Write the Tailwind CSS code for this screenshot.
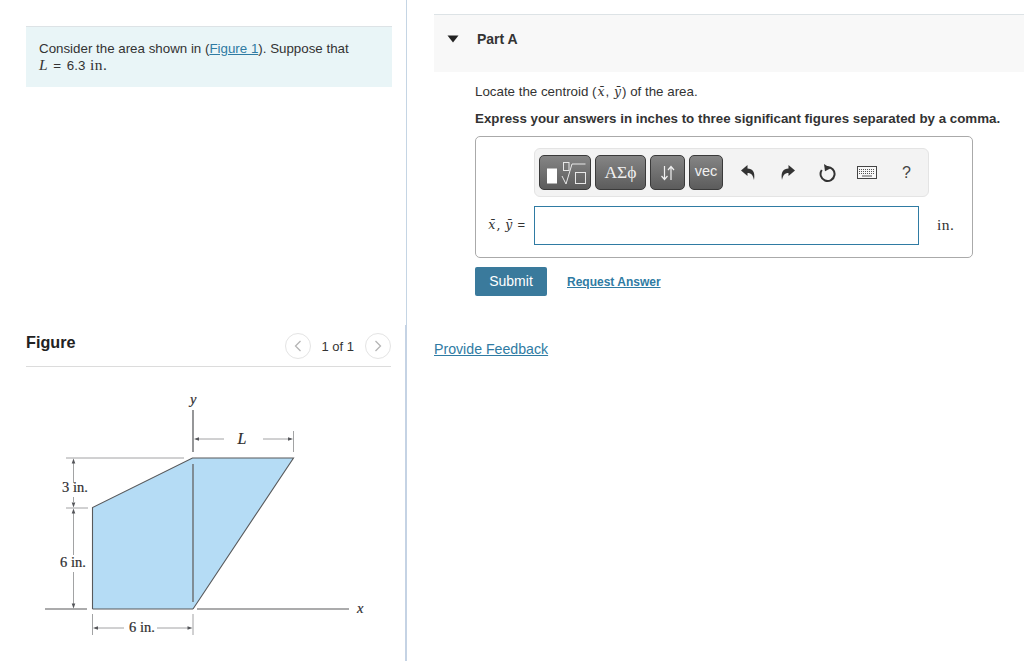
<!DOCTYPE html>
<html lang="en">
<head>
    <meta charset="UTF-8">
    <meta name="viewport" content="width=device-width, initial-scale=1.0">
    <title>Part A</title>
    <script src="https://cdn.jsdelivr.net/npm/@tailwindcss/browser@4"></script>
</head>
<body class="bg-white font-['Liberation_Sans',sans-serif] text-[#333] text-[13.33px] overflow-hidden">

<div class="flex w-[1024px] h-[661px] overflow-hidden">

    <!-- Left column -->
    <div class="w-[407px] flex flex-col shrink-0">
        <div class="h-[325px] border-r border-[#c5d5e4] pt-[26px] pl-[26px] pr-[14px]">
            <div class="h-[61px] bg-[#e9f5f7] border-t border-[#dde3e6] pl-[13px] pt-[13px] leading-[17px]">
                <p>Consider the area shown in (<a href="#" class="text-[#2f7ba3] underline">Figure 1</a>). Suppose that</p>
                <p class="leading-[16px] whitespace-nowrap"><i class="font-['Liberation_Serif',serif] text-[15.5px]">L</i> <span class="mx-[2px]">=</span> 6.3 <span class="font-['Liberation_Serif',serif] text-[15.5px] tracking-[0.5px] ml-[1px]">in.</span></p>
            </div>
        </div>

        <div class="flex-1 border-r-2 border-[#c5d3e4]">
            <!-- Figure header -->
            <div class="ml-[26px] w-[365px] h-[42px] border-b border-[#dcdcdc] flex items-start justify-between">
                <h2 class="text-[16.2px] font-bold text-[#222] leading-[16px] pt-[9px]">Figure</h2>
                <div class="flex items-center gap-[7px] pt-[8px]">
                    <span class="w-[26px] h-[26px] rounded-full border border-[#e4e4e4] flex items-center justify-center">
                        <svg width="8" height="12" viewBox="0 0 8 12" fill="none" stroke="#b5b5b5" stroke-width="1.3"><path d="M6.5 1 L1.5 6 L6.5 11"/></svg>
                    </span>
                    <span class="text-[#333] text-[13px] ml-[3px] mt-[2px]">1 of 1</span>
                    <span class="w-[26px] h-[26px] rounded-full border border-[#e4e4e4] flex items-center justify-center ml-[4px]">
                        <svg width="8" height="12" viewBox="0 0 8 12" fill="none" stroke="#b5b5b5" stroke-width="1.3"><path d="M1.5 1 L6.5 6 L1.5 11"/></svg>
                    </span>
                </div>
            </div>

            <!-- Figure drawing -->
            <svg class="block" width="405" height="294" viewBox="0 367 405 294" fill="none">
                <polygon points="92.5,507.5 192.5,458 293.5,458 193,609 92.5,609" fill="#b5dcf5"/>
                <g stroke="#58595b" stroke-width="1.1">
                    <path d="M92.5 609 V507.5 L192.5 458 H293.5 L193 609"/>
                    <path d="M45 609 H87 M92.5 609 H193 M197 609 H349" stroke-width="1.2"/>
                </g>
                <path d="M193 410 V452 M193 464 V602" stroke="#6a6b6d" stroke-width="1.4"/>
                <g stroke="#8a8b8d" stroke-width="0.8">
                    <path d="M66 458 H184"/>
                    <path d="M66 508 H88"/>
                    <path d="M73.500 461 V483 M73.500 497 V502 M73.500 513 V555 M73.500 572 V606"/>
                    <path d="M293.500 431 V452"/>
                    <path d="M196 439 H224 M263 439 H291"/>
                    <path d="M92.500 614 V635 M193 614 V635"/>
                    <path d="M95 628 H124 M157 628 H190"/>
                </g>
                <g fill="#55565a">
                    <path d="M73.500 458.500 l-1.800 5 h3.600z M73.500 507.500 l-1.800 -5 h3.600z M73.500 508.500 l-1.800 5 h3.600z M73.500 608.500 l-1.800 -5 h3.600z"/>
                    <path d="M194 439 l5 -1.800 v3.600z M293 439 l-5 -1.800 v3.600z M93 628 l5 -1.800 v3.600z M192.500 628 l-5 -1.800 v3.600z"/>
                </g>
                <g fill="#2e2e30" font-family="Liberation Serif, serif" font-size="14.5" stroke="#2e2e30" stroke-width="0.2">
                    <text x="62" y="492">3 in.</text>
                    <text x="60" y="567">6 in.</text>
                    <text x="129" y="632">6 in.</text>
                    <text x="237.500" y="444" font-size="16" font-style="italic">L</text>
                    <text x="190" y="404" font-style="italic">y</text>
                    <text x="357" y="613" font-style="italic">x</text>
                </g>
            </svg>
        </div>
    </div>

    <!-- Right column -->
    <div class="flex-1 pl-[27px] pt-[14px]">
        <div class="h-[58px] bg-[#f8f8f8] border-t border-[#dde3e6] flex items-start">
            <svg class="mt-[20px] ml-[13px]" width="12" height="8" viewBox="0 0 12 8"><path d="M0.500 0.500 H11.500 L6 7.500z" fill="#222"/></svg>
            <span class="ml-[18px] mt-[15px] text-[14px] font-bold text-[#333] leading-[18px]">Part A</span>
        </div>

        <div class="pl-[41px]">
            <p class="mt-[11px] leading-[17px]">Locate the centroid (<span class="font-['DejaVu_Serif',serif] italic text-[12.5px] mx-[1px]">x̄</span>, <span class="font-['DejaVu_Serif',serif] italic text-[12.5px] mx-[1px]">ȳ</span>) of the area.</p>
            <p class="mt-[10px] font-bold leading-[17px]">Express your answers in inches to three significant figures separated by a comma.</p>

            <!-- Answer box -->
            <div class="mt-[9px] w-[498px] h-[122px] border border-[#aaaaaa] rounded-[5px] pt-[11px]">
                <div class="ml-[58px] w-[395px] h-[49px] bg-[#f3f3f3] border border-[#e4e4e4] rounded-[6px] flex items-center pl-[4px]">
                    <div class="flex gap-[4px]">
                        <button class="w-[52px] h-[35px] rounded-[5px] border border-[#3a3a3a] bg-linear-to-b from-[#858585] to-[#5c5c5c] flex items-center justify-center">
                            <svg width="48" height="30" viewBox="0 0 48 30" fill="none">
                                <rect x="6" y="10.500" width="10" height="15" fill="#fff"/>
                                <g stroke="#e8e8e8" stroke-width="1">
                                    <rect x="22.500" y="4.500" width="5.500" height="8"/>
                                    <rect x="34.500" y="14.500" width="10" height="11"/>
                                    <path d="M21 18 L25 26 L31 6 H44.500"/>
                                </g>
                            </svg>
                        </button>
                        <button class="w-[51px] h-[35px] rounded-[5px] border border-[#3a3a3a] bg-linear-to-b from-[#858585] to-[#5c5c5c] text-[#f0f0f0] text-[17.5px] font-['Liberation_Serif','DejaVu_Serif',serif]">ΑΣϕ</button>
                        <button class="w-[35px] h-[35px] rounded-[5px] border border-[#3a3a3a] bg-linear-to-b from-[#858585] to-[#5c5c5c] flex items-center justify-center">
                            <svg width="16" height="16" viewBox="0 0 16 16" fill="none" stroke="#f0f0f0" stroke-width="1.200">
                                <path d="M4.500 1 V14.500 M1.500 11 L4.500 14.500 L7.500 11"/>
                                <path d="M11 15 V1.500 M8 5 L11 1.500 L14 5"/>
                            </svg>
                        </button>
                        <button class="w-[34px] h-[35px] rounded-[5px] border border-[#3a3a3a] bg-linear-to-b from-[#858585] to-[#5c5c5c] text-[#f0f0f0] text-[14.500px] leading-[14px] pb-[3px]">vec</button>
                    </div>

                    <!-- undo -->
                    <svg class="ml-[17px]" width="16" height="17" viewBox="0 0 16 17"><path d="M1 6.500 L7.500 1 V4.500 C12.500 4.500 15.500 8 14 16 C13 11.500 11.500 9 7.500 9 V12z" fill="#333"/></svg>
                    <!-- redo -->
                    <svg class="ml-[24px]" width="16" height="17" viewBox="0 0 16 17"><path d="M15 6.500 L8.500 1 V4.500 C3.500 4.500 0.500 8 2 16 C3 11.500 4.500 9 8.500 9 V12z" fill="#333"/></svg>
                    <!-- reset -->
                    <svg class="ml-[23px]" width="18" height="20" viewBox="0 0 18 20" fill="none">
                        <path d="M2.800 7 A7 7 0 1 0 8 4" stroke="#333" stroke-width="2"/>
                        <path d="M5 1 L11.700 5.300 L6 8.300z" fill="#333"/>
                    </svg>
                    <!-- keyboard -->
                    <svg class="ml-[20px]" width="20" height="13" viewBox="0 0 20 13" fill="none">
                        <rect x="0.500" y="0.500" width="19" height="12" stroke="#444" fill="#f8f8f8"/>
                        <path d="M2 3.500 H18 M2 5.500 H18 M2 7.500 H18" stroke="#555" stroke-width="1" stroke-dasharray="1 1"/>
                        <path d="M5 10 H15" stroke="#555"/>
                    </svg>
                    <span class="ml-[25px] text-[16px] text-[#444] leading-none">?</span>
                </div>

                <div class="flex items-center mt-[9px]">
                    <span class="w-[49px] text-right font-['DejaVu_Serif',serif] text-[12.5px] whitespace-nowrap pb-[1px]"><i class="mr-[1px]">x̄</i>, <i class="mx-[1px]">ȳ</i> <span class="font-['Liberation_Sans',sans-serif] text-[13px]">=</span></span>
                    <div class="ml-[9px] w-[385px] h-[39px] border border-[#2f7ba3] bg-white"></div>
                    <span class="ml-[18px] font-['Liberation_Serif',serif] text-[15.5px] tracking-[0.5px] pb-[2px]">in.</span>
                </div>
            </div>

            <div class="flex items-center mt-[9px]">
                <button class="w-[72px] h-[29px] bg-[#3a7a9c] rounded-[2px] text-white text-[14px]">Submit</button>
                <a href="#" class="ml-[20px] text-[12px] font-bold text-[#2f7ba3] underline">Request Answer</a>
            </div>
        </div>

        <a href="#" class="block mt-[44px] text-[14.170px] text-[#2f7ba3] underline leading-[18px]">Provide Feedback</a>
    </div>
</div>

</body>
</html>
